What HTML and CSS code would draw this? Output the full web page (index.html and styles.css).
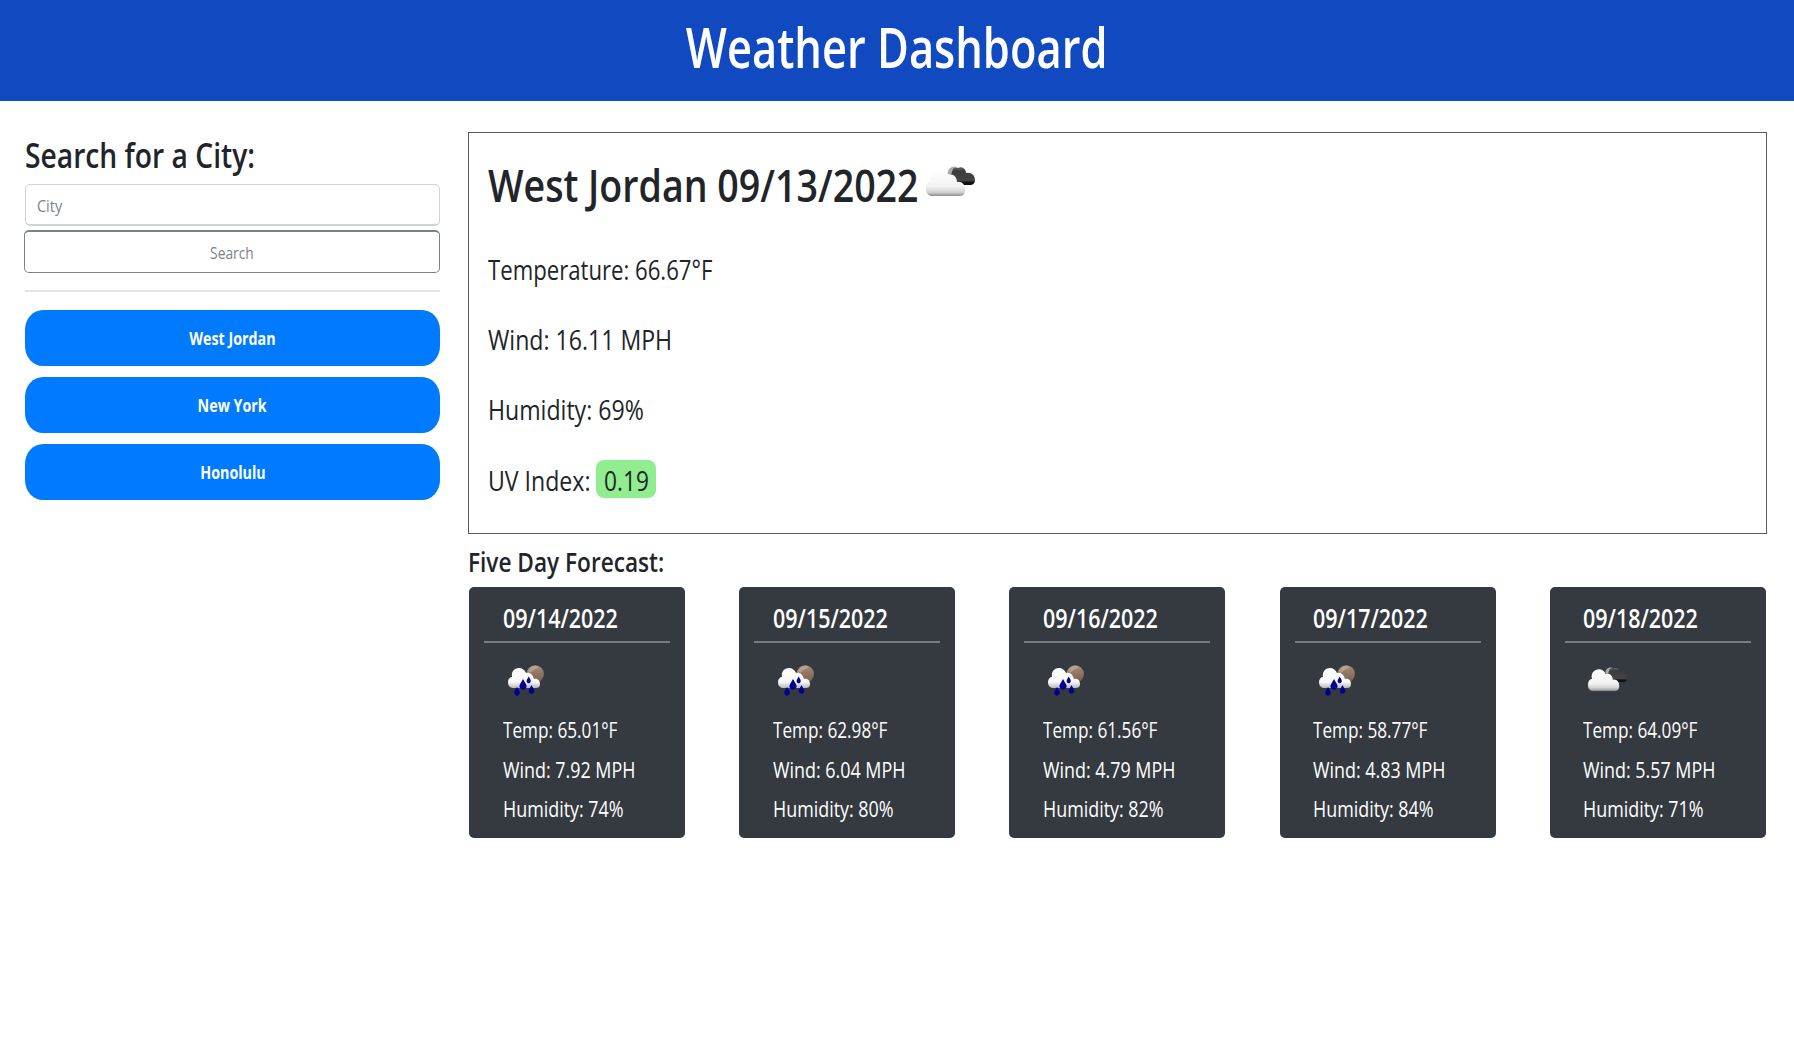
FILE: index.html
```html
<!DOCTYPE html>
<html lang="en">
<head>
<meta charset="utf-8">
<title>Weather Dashboard</title>
<link rel="stylesheet" href="styles.css">
</head>
<body>
<svg class="defs" width="0" height="0">
  <defs>
    <linearGradient id="white" x1="0" y1="0" x2="0" y2="1"><stop offset="0" stop-color="#fff"/><stop offset=".65" stop-color="#f2f2f2"/><stop offset=".86" stop-color="#d2d2d2"/><stop offset="1" stop-color="#8e8e8e"/></linearGradient>
    <linearGradient id="bright" x1="0" y1="0" x2="0" y2="1"><stop offset="0" stop-color="#fff"/><stop offset=".7" stop-color="#f8f8f8"/><stop offset="1" stop-color="#b8b8bc"/></linearGradient>
    <linearGradient id="dark" x1="0" y1="0" x2="0" y2="1"><stop offset="0" stop-color="#666"/><stop offset=".2" stop-color="#3c3c3c"/><stop offset=".75" stop-color="#444"/><stop offset=".85" stop-color="#111"/><stop offset="1" stop-color="#111"/></linearGradient>
    <linearGradient id="moon" x1="0" y1="0" x2="0" y2="1"><stop offset="0" stop-color="#a58d7b"/><stop offset="1" stop-color="#775c48"/></linearGradient>
    <symbol id="clouds" viewBox="0 0 50 31">
      <path d="M24 9C24 4 28 1 32 3C36 1 40 4 40 8C45 7 49 10 49 15C49 18 47 20 44 20H34L24 13Z" fill="url(#dark)"/>
      <path d="M21.5 9Q22 1 30 1.5L27 4L25 10Z" fill="#aaa"/>
      <path d="M5 31C1 30 0 27 0 23C0 19 2 16 5 16C3 9 8 4 14 4C18 4 21 7 22 10C27 8 31 12 31 17C36 16 39 20 39 24C39 28 38 31 34 31Z" fill="url(#white)"/>
    </symbol>
    <symbol id="rain" viewBox="0 0 38 32">
      <circle cx="27.2" cy="9" r="8.7" fill="url(#moon)"/>
      <path d="M20 6Q23 0 29 1Q32 3 27 4L22 8Z" fill="#c5b3a5" opacity=".6"/>
      <path d="M4 23C1 22 0 20 0 17C0 14 2 12 4 12C3 6 7 3 11 3C14 3 17 5 18 8C22 7 25 10 26 14C30 13 32 16 32 19C32 22 30 23 28 23Z" fill="url(#bright)"/>
      <g fill="#000093"><path d="M9 22L11.4 26A2.9 2.9 0 1 1 6.6 26Z"/><path d="M15 14L18 19.2A3.5 3.5 0 1 1 12 19.2Z"/><path d="M20.7 11.5L22.5 14.8A2.1 2.3 0 1 1 18.9 14.8Z"/><path d="M23.5 20L25.8 24.2A2.8 2.8 0 1 1 21.2 24.2Z"/></g>
    </symbol>
  </defs>
</svg>
<header class="header"><h1><span class="fit">Weather Dashboard</span></h1></header>
<main class="layout">
  <aside class="sidebar">
    <h3 class="search-title"><span class="fit">Search for a City:</span></h3>
    <div class="field"><span class="fit">City</span></div>
    <button class="search-btn"><span class="fit">Search</span></button>
    <hr class="rule">
    <div class="history">
      <button class="city"><span class="fit">West Jordan</span></button>
      <button class="city"><span class="fit">New York</span></button>
      <button class="city"><span class="fit">Honolulu</span></button>
    </div>
  </aside>
  <section class="content">
    <div class="current">
      <h2><span class="fit">West Jordan 09/13/2022</span></h2>
      <svg class="now-icon"><use href="#clouds"/></svg>
      <p class="temp"><span class="fit">Temperature: 66.67°F</span></p>
      <p><span class="fit">Wind: 16.11 MPH</span></p>
      <p><span class="fit">Humidity: 69%</span></p>
      <p><span class="fit">UV Index:</span><span class="uv"><span class="fit">0.19</span></span></p>
    </div>
    <h4 class="forecast-title"><span class="fit">Five Day Forecast:</span></h4>
    <div class="cards">
      <article class="card"><h5><span class="fit">09/14/2022</span></h5><svg class="icon"><use href="#rain"/></svg><p class="temp"><span class="fit">Temp: 65.01°F</span></p><p><span class="fit">Wind: 7.92 MPH</span></p><p><span class="fit">Humidity: 74%</span></p></article>
      <article class="card"><h5><span class="fit">09/15/2022</span></h5><svg class="icon"><use href="#rain"/></svg><p class="temp"><span class="fit">Temp: 62.98°F</span></p><p><span class="fit">Wind: 6.04 MPH</span></p><p><span class="fit">Humidity: 80%</span></p></article>
      <article class="card"><h5><span class="fit">09/16/2022</span></h5><svg class="icon"><use href="#rain"/></svg><p class="temp"><span class="fit">Temp: 61.56°F</span></p><p><span class="fit">Wind: 4.79 MPH</span></p><p><span class="fit">Humidity: 82%</span></p></article>
      <article class="card"><h5><span class="fit">09/17/2022</span></h5><svg class="icon"><use href="#rain"/></svg><p class="temp"><span class="fit">Temp: 58.77°F</span></p><p><span class="fit">Wind: 4.83 MPH</span></p><p><span class="fit">Humidity: 84%</span></p></article>
      <article class="card"><h5><span class="fit">09/18/2022</span></h5><svg class="icon cloudy"><use href="#clouds"/></svg><p class="temp"><span class="fit">Temp: 64.09°F</span></p><p><span class="fit">Wind: 5.57 MPH</span></p><p><span class="fit">Humidity: 71%</span></p></article>
    </div>
  </section>
</main>
</body>
</html>
```
FILE: styles.css
```css
* { box-sizing: border-box; }
body { margin: 0; background: #fff; color: #212529; font-family: "Open Sans", "Noto Sans", sans-serif; }
h1, h2, h3, h4, h5, p { margin: 0; white-space: nowrap; font-weight: 600; }
button { font-family: inherit; }
.defs { position: absolute; }
.fit { display: inline-block; transform: scaleX(var(--sx, .85)); transform-origin: left center; }
.header { height: 101px; background: #1149c1; color: #fff; display: flex; justify-content: center; }
.header h1 { --sx: .776; font-size: 56px; font-weight: 650; line-height: 93px; }
.header .fit, .search-btn .fit, .city .fit { transform-origin: center; }
.layout { display: grid; grid-template-columns: 416px 1299px; column-gap: 28px; padding: 31px 0 0 24px; }
.search-title { --sx: .83; height: 52px; font-size: 34px; line-height: 46px; padding-left: 1px; }
.field { height: 42px; margin-left: 1px; border: 1px solid #ced4da; border-bottom-width: 2px; border-radius: 5px; padding-left: 11px; font-size: 17px; line-height: 42px; color: #7b838a; }
.search-btn { --sx: .81; display: block; width: 416px; height: 43px; margin-top: 4px; border: 1px solid #7b8287; border-top-width: 2px; border-radius: 5px; background: #fff; color: #7b838a; font-size: 17px; line-height: 39px; padding: 0; }
.rule { margin: 17px 0 18px 1px; border: 0; border-top: 2px solid #e3e4e5; }
.history { display: grid; gap: 11px; padding-left: 1px; }
.city { --sx: .84; height: 56px; border: 0; border-radius: 18px / 20px; background: #007bff; color: #fff; font-size: 17px; line-height: 55px; font-weight: 700; padding: 0; }
.current { --sx: .825; height: 402px; border: 1px solid #555a5e; padding: 20px 18.5px; display: grid; grid-template-columns: 438px auto; grid-template-rows: 81px repeat(4, 70.2px); }
.current h2 { --sx: .817; width: 438px; font-size: 46px; line-height: 62px; }
.now-icon { width: 50px; height: 31px; margin-top: 12px; }
.current p { grid-column: 1 / -1; font-size: 28px; line-height: 72px; display: flex; align-items: center; font-weight: 400; }
.current .temp { --sx: .791; }
.uv { --sx: .81; width: 60px; height: 38px; margin: -2px 0 0 -16px; border-radius: 8px; background: #90ee90; line-height: 40px; padding-left: 8px; }
.forecast-title { --sx: .838; height: 53px; font-size: 27px; line-height: 55px; }
.cards { display: grid; grid-template-columns: repeat(5, 216px); gap: 54.2px; padding-left: 1px; }
.card { height: 251px; border-radius: 5px; background: #343a40; color: #fff; padding: 0 15px; }
.card h5 { --sx: .794; height: 56px; border-bottom: 2px solid #777c80; padding-left: 18.6px; font-size: 27px; line-height: 62px; }
.icon { display: block; width: 38px; height: 32px; margin: 22px 0 0 24px; }
.cloudy { width: 40px; height: 29px; margin: 21px 0 17px 23px; }
.card p { --sx: .813; padding-left: 18.6px; font-size: 22px; line-height: 39.5px; font-weight: 400; }
.card .temp { --sx: .78; margin-top: 13px; }
```
